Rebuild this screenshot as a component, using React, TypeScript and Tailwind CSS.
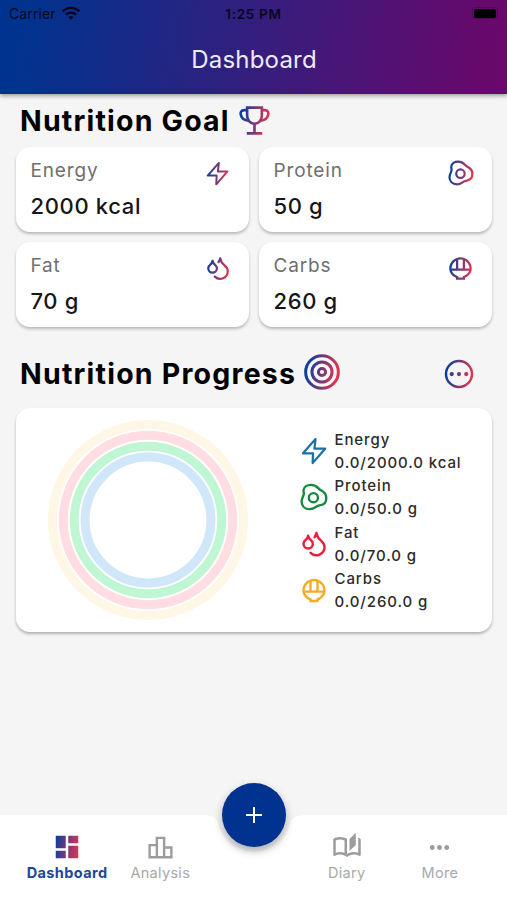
import type { ReactNode } from "react";
import { Droplets } from "lucide-react";
import {
  MdDashboard,
  MdMoreHoriz,
  MdOutlineAutoStories,
  MdOutlineLeaderboard,
  MdOutlineRiceBowl,
  MdWifi,
} from "react-icons/md";

const BRAND = "url(#brand)";

function BrandGradient() {
  return (
    <svg className="absolute size-0" aria-hidden="true">
      <defs>
        <linearGradient id="brand" gradientUnits="userSpaceOnUse" x1="2" y1="10" x2="22" y2="13">
          <stop offset="0" stopColor="#0a3f9f" />
          <stop offset="1" stopColor="#e2344f" />
        </linearGradient>
      </defs>
    </svg>
  );
}

type IconProps = { color: string; large?: boolean };

function BoltIcon({ color, large }: IconProps) {
  return (
    <svg
      width={large ? 28 : 25}
      height={large ? 28 : 25}
      viewBox="0 0 24 24"
      fill="none"
      stroke={color}
      strokeWidth="1.9"
      strokeLinejoin="round"
    >
      <path d="M13.3 1.8L2.6 14H11.2L10.8 22.4L21.6 10H12.4Z" />
    </svg>
  );
}

function EggIcon({ color, large }: IconProps) {
  return (
    <svg
      width={large ? 28 : 26}
      height={large ? 28 : 26}
      viewBox="0 0 24 24"
      fill="none"
      stroke={color}
      strokeWidth="2.05"
    >
      <path d="M3 6.2C3.3 3.2 6.2 1.6 9.3 1.6C12.6 1.6 14.3 2.9 15.6 4.4C17 6 18.4 6.5 20 7.6C21.8 8.8 22.5 11 22.5 13C22.5 16.5 20.4 18.6 17.4 19C15.2 19.3 14.4 19.9 13 20.9C11.6 22 10 22.4 8.3 22.4C4 22.4 1.4 19.6 1.4 16C1.4 12.6 3.3 11.4 3.3 9C3.3 8 2.9 7.2 3 6.2Z" />
      <circle cx="11.5" cy="12.6" r="3.9" />
    </svg>
  );
}

function DropsIcon({ color, large }: IconProps) {
  return <Droplets size={large ? 29 : 26} stroke={color} strokeWidth={large ? 2.1 : 2.05} />;
}

function RiceIcon({ color, large }: IconProps) {
  return <MdOutlineRiceBowl size={large ? 29 : 27} fill={color} />;
}

function TrophyIcon() {
  return (
    <svg width="31" height="31" viewBox="0 0 24 24" fill="none" stroke={BRAND} strokeWidth="2.05">
      <path d="M6.3 2H17.7V8.6C17.7 11.4 15.2 14.6 12 14.6S6.3 11.4 6.3 8.6Z" />
      <path d="M6.3 4H4.2C1.5 4 1 5.8 1.4 7.6C2 10.3 4.4 12 7.4 12.2" />
      <path d="M17.7 4H19.8C22.5 4 23 5.8 22.6 7.6C22 10.3 19.6 12 16.6 12.2" />
      <path d="M12 14.4V21.8M6 22H18" />
    </svg>
  );
}

function TargetIcon() {
  return (
    <svg width="36" height="36" viewBox="0 0 24 24" fill="none" stroke={BRAND} strokeWidth="2">
      <circle cx="12" cy="12" r="10.9" />
      <circle cx="12" cy="12" r="6.7" />
      <circle cx="12" cy="12" r="2.4" />
    </svg>
  );
}

function MoreCircleIcon() {
  return (
    <svg width="30" height="30" viewBox="0 0 24 24" fill="none" stroke={BRAND} strokeWidth="1.95">
      <circle cx="12" cy="12" r="10.4" />
      <g fill={BRAND} stroke="none">
        <circle cx="6.2" cy="12" r="1.7" />
        <circle cx="12" cy="12" r="1.7" />
        <circle cx="17.8" cy="12" r="1.7" />
      </g>
    </svg>
  );
}

function GoalCard({ label, value, icon }: { label: string; value: string; icon: ReactNode }) {
  return (
    <div className="flex h-[85px] justify-between rounded-[14px] bg-white pt-[6px] pl-[15px] shadow-[0_2px_3px_rgba(0,0,0,0.25)]">
      <div>
        <p className="text-[19px] leading-[35px] tracking-[0.85px] text-[#6f6f6f]">{label}</p>
        <p className="text-[22px] leading-9 font-medium tracking-[0.65px] text-[#161616]">{value}</p>
      </div>
      <div className="mt-[6px] mr-[17px] flex size-[28px] items-center justify-center">{icon}</div>
    </div>
  );
}

function ProgressItem({ label, value, icon }: { label: string; value: string; icon: ReactNode }) {
  return (
    <li className="flex items-center">
      <span className="flex w-[28px] justify-center">{icon}</span>
      <div className="ml-[6.5px] text-[15px] leading-[23.2px] font-medium whitespace-nowrap text-[#2b2b2b]">
        <p className="tracking-[0.9px]">{label}</p>
        <p className="tracking-[0.9px]">{value}</p>
      </div>
    </li>
  );
}

function ProgressRings() {
  return (
    <svg width="202" height="202" viewBox="-101 -101 202 202" fill="none" strokeWidth="9">
      <circle r="95.6" stroke="#fff7e6" />
      <circle r="84.7" stroke="#ffdde3" />
      <circle r="73.8" stroke="#bff6d4" />
      <circle r="62.9" stroke="#d0e7f9" />
    </svg>
  );
}

function NavItem({ label, icon, active }: { label: string; icon: ReactNode; active?: boolean }) {
  return (
    <a className="flex flex-col items-center pt-[17.5px]">
      <span className="flex h-[30px] items-center">{icon}</span>
      <span
        className={
          active
            ? "mt-[2px] text-[14.5px] leading-[18px] font-bold tracking-[0.38px] text-[#1d479d]"
            : "mt-[2px] text-[14.5px] leading-[18px] tracking-[0.3px] text-[#a9a9a9]"
        }
      >
        {label}
      </span>
    </a>
  );
}

export default function App() {
  return (
    <div className="relative flex h-[900px] w-[507px] flex-col overflow-hidden bg-[#f5f5f5] font-['Inter','Liberation_Sans',sans-serif]">
      <BrandGradient />

      <header className="h-[94px] shrink-0 bg-[linear-gradient(98deg,#00338f_5%,#6a086b_97%)] shadow-[0_2px_4px_rgba(0,0,0,0.35)]">
        <div className="grid h-7 grid-cols-3 items-center px-[9px] text-[#08081a]">
          <div className="flex items-center gap-[5px]">
            <span className="-mt-px text-[14px] tracking-[0.1px]">Carrier</span>
            <MdWifi size={20} className="-mt-0.5" />
          </div>
          <p className="text-center text-[13.5px] font-semibold tracking-[0.7px]">1:25 PM</p>
          <div className="flex items-center justify-end">
            <span className="-mt-0.5 flex h-[12px] w-[26px] items-center justify-center rounded-[3px] border border-black/20">
              <span className="h-[9px] w-[22px] rounded-[2px] bg-black" />
            </span>
          </div>
        </div>
        <h1 className="pl-px text-center text-[24px] leading-[64px] tracking-[0.2px] text-[#eeeafa]">Dashboard</h1>
      </header>

      <main className="flex flex-1 flex-col px-[15.5px]">
        <div className="flex h-[53px] shrink-0 items-center pl-[4.5px]">
          <h2 className="pt-[2px] text-[28.5px] font-bold tracking-[1.2px] text-black">Nutrition Goal</h2>
          <span className="ml-[9px]">
            <TrophyIcon />
          </span>
        </div>

        <section className="grid grid-cols-2 gap-[10px]">
          <GoalCard label="Energy" value="2000 kcal" icon={<BoltIcon color={BRAND} />} />
          <GoalCard label="Protein" value="50 g" icon={<EggIcon color={BRAND} />} />
          <GoalCard label="Fat" value="70 g" icon={<DropsIcon color={BRAND} />} />
          <GoalCard label="Carbs" value="260 g" icon={<RiceIcon color={BRAND} />} />
        </section>

        <div className="mt-3 flex h-[69px] shrink-0 items-center pl-[4.5px]">
          <h2 className="pt-[2px] text-[28.5px] font-bold tracking-[1.22px] whitespace-nowrap text-black">
            Nutrition Progress
          </h2>
          <span className="-mt-[3px] ml-[7.5px]">
            <TargetIcon />
          </span>
          <button className="mr-[18px] ml-auto">
            <MoreCircleIcon />
          </button>
        </div>

        <section className="flex h-[224px] shrink-0 items-center rounded-[14px] bg-white pl-[31px] shadow-[0_2px_3px_rgba(0,0,0,0.28)]">
          <ProgressRings />
          <ul className="ml-[51.5px] pt-px">
            <ProgressItem label="Energy" value="0.0/2000.0 kcal" icon={<BoltIcon large color="#1d6fa8" />} />
            <ProgressItem label="Protein" value="0.0/50.0 g" icon={<EggIcon large color="#17893c" />} />
            <ProgressItem label="Fat" value="0.0/70.0 g" icon={<DropsIcon large color="#ef1d3c" />} />
            <ProgressItem label="Carbs" value="0.0/260.0 g" icon={<RiceIcon large color="#f5ab22" />} />
          </ul>
        </section>
      </main>

      <nav className="relative h-[85.5px] shrink-0">
        <svg className="absolute inset-0" width="507" height="86" viewBox="0 0 507 86" fill="#ffffff">
          <path d="M0 0H201Q216 0 218 8.4A37 37 0 0 0 290 8.4Q292 0 307 0H507V86H0Z" />
        </svg>
        <div className="relative grid h-full grid-cols-5 px-[20.5px]">
          <NavItem active label="Dashboard" icon={<MdDashboard size={30} fill={BRAND} />} />
          <NavItem label="Analysis" icon={<MdOutlineLeaderboard size={29} color="#9c9c9c" />} />
          <span />
          <NavItem label="Diary" icon={<MdOutlineAutoStories size={30} color="#9c9c9c" />} />
          <NavItem label="More" icon={<MdMoreHoriz size={29} color="#9c9c9c" />} />
        </div>
        <button className="absolute -top-8 left-[222px] flex size-16 items-center justify-center rounded-full bg-[#00338f] shadow-[0_4px_8px_rgba(0,0,0,0.3)]">
          <svg width="16" height="16" viewBox="0 0 16 16" stroke="#ffffff" strokeWidth="2">
            <path d="M8 0V16M0 8H16" />
          </svg>
        </button>
      </nav>
    </div>
  );
}
